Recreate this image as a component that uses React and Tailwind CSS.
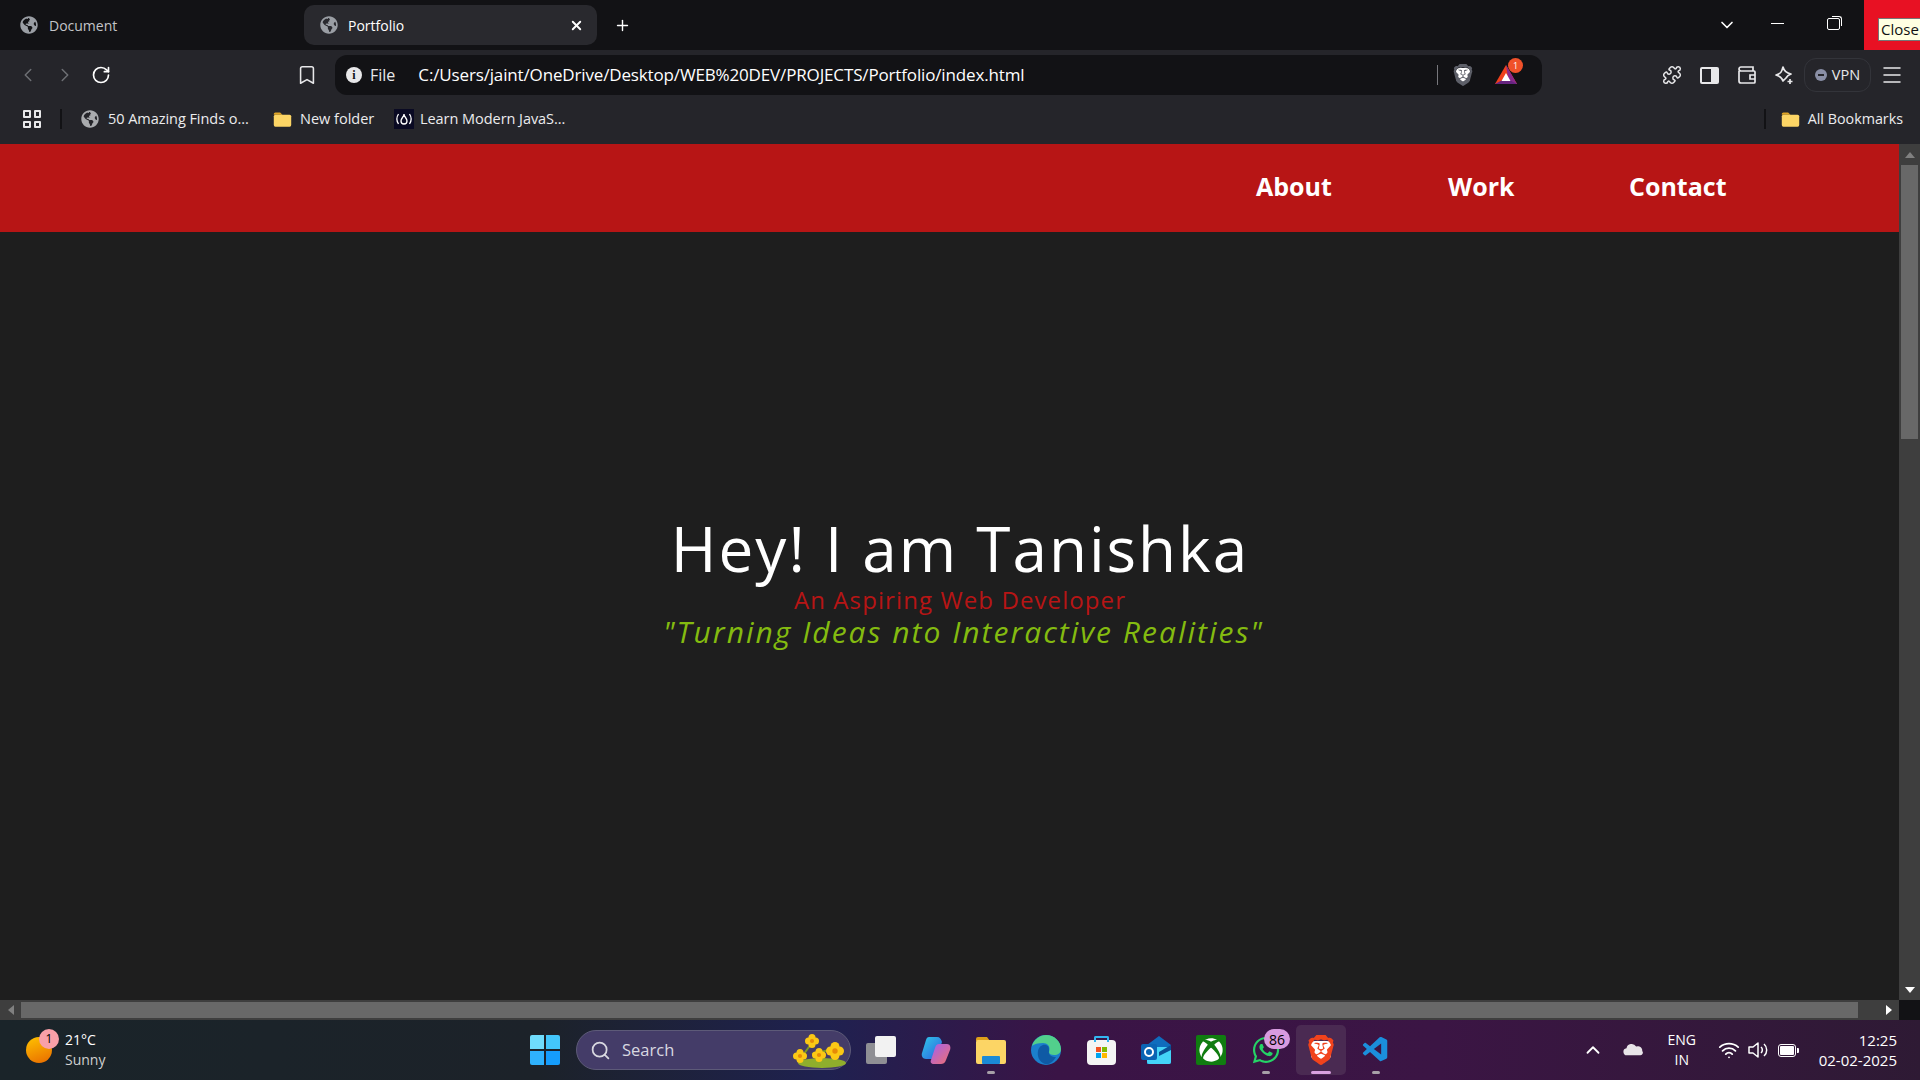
import React from 'react';
import { Bookmark, ChevronDown, ChevronLeft, ChevronRight, ChevronUp, Menu, Plus, Puzzle, RotateCw, Search, Wifi, X } from 'lucide-react';
import { FaGlobeAmericas, FaWhatsapp, FaXbox } from 'react-icons/fa';
import { SiBrave } from 'react-icons/si';
import { VscVscode } from 'react-icons/vsc';

const FolderIcon = ({ className }) => (
  <svg viewBox="0 0 24 20" className={className}>
    <path d="M1 3a2 2 0 012-2h6l3 3H1z" fill="#e0a526" />
    <rect x="1" y="4" width="22" height="15" rx="2" fill="#fcd565" />
  </svg>
);

const BraveBadge = ({ color, size }) => (
  <div className={`relative flex items-center justify-center ${size}`}>
    <div className="absolute inset-x-[18%] inset-y-[20%] rounded-[4px] bg-white" />
    <SiBrave className={`relative h-full w-full ${color}`} />
  </div>
);

const Blossom = ({ x, y, r }) => (
  <g fill="#fbc815">
    <circle cx={x - r} cy={y} r={r} />
    <circle cx={x + r} cy={y} r={r} />
    <circle cx={x} cy={y - r} r={r} />
    <circle cx={x} cy={y + r} r={r} />
    <circle cx={x} cy={y} r={r * 0.6} fill="#e58a07" />
  </g>
);

const TabStrip = () => (
  <div className="flex h-[50px] items-center bg-[#121215] text-[14px]">
    <div className="flex h-[42px] w-[304px] items-center gap-[11px] pl-[20px] text-[#c3c4c8]">
      <FaGlobeAmericas className="h-[18px] w-[18px] text-[#9a9ea4]" />
      <span>Document</span>
    </div>
    <div className="flex h-[40px] w-[293px] items-center gap-[10px] rounded-[10px] bg-[#29292e] pl-[16px] pr-[13px] text-white">
      <FaGlobeAmericas className="h-[18px] w-[18px] text-[#9a9ea4]" />
      <span className="flex-1">Portfolio</span>
      <X className="h-[15px] w-[15px]" strokeWidth={3} />
    </div>
    <Plus className="ml-[17px] h-[17px] w-[17px] text-white" strokeWidth={2} />
    <div className="flex-1" />
    <ChevronDown className="h-[20px] w-[20px] text-white" strokeWidth={2} />
    <div className="ml-[34px] mb-[3px] h-px w-[13px] bg-white" />
    <div className="relative ml-[43px] h-[12px] w-[13px] -translate-y-[1px] rounded-[2px] border border-white">
      <div className="absolute -right-[3px] -top-[3px] h-[10px] w-[10px] rounded-tr-[3px] border-r border-t border-white" />
    </div>
    <div className="relative ml-[24px] h-[50px] w-[56px] bg-[#e81123]">
      <div className="absolute left-[14px] top-[18px] flex h-[23px] w-[44px] items-center justify-center border border-[#767676] bg-[#ffffe1] text-[15px] text-[#111]">
        Close
      </div>
    </div>
  </div>
);

const AddressBar = () => (
  <div className="flex h-[50px] items-center bg-[#25252a]">
    <ChevronLeft className="ml-[17px] h-[22px] w-[22px] text-[#6e7075]" strokeWidth={1.6} />
    <ChevronRight className="ml-[15px] h-[22px] w-[22px] text-[#6e7075]" strokeWidth={1.6} />
    <RotateCw className="ml-[15px] h-[20px] w-[20px] text-white" strokeWidth={2} />
    <Bookmark className="ml-[185px] h-[22px] w-[22px] text-[#e8e8ea]" strokeWidth={1.7} />
    <div className="ml-[17px] flex h-[40px] w-[1207px] items-center rounded-[12px] bg-[#121215] pl-[11px] pr-[24px] text-[17px] text-white">
      <span className="flex h-[16px] w-[16px] items-center justify-center rounded-full bg-[#e8e8ea] font-['Liberation_Serif',serif] text-[12px] font-bold text-[#121215]">i</span>
      <span className="ml-[8px] text-[16px] text-[#e8e8ea]">File</span>
      <span className="ml-[23px] tracking-[-0.15px]">C:/Users/jaint/OneDrive/Desktop/WEB%20DEV/PROJECTS/Portfolio/index.html</span>
      <div className="flex-1" />
      <div className="h-[20px] w-px bg-[#77777c]" />
      <BraveBadge color="text-[#5d5f68]" size="ml-[14px] h-[22px] w-[22px]" />
      <div className="relative ml-[20px] h-[24px] w-[24px]">
        <svg viewBox="0 0 24 24" className="h-[24px] w-[24px]">
          <path d="M12 2l11 19H1z" fill="#f0401c" />
          <path d="M12 2l11 19h-8z" fill="#8b2a8e" />
          <path d="M1 21h22l-11-6z" fill="#66247f" />
          <path d="M12 10l4.500 8h-9z" fill="#fff" />
        </svg>
        <span className="absolute -right-[5px] -top-[5px] flex h-[15px] w-[15px] items-center justify-center rounded-full bg-[#f0512a] text-[9px] text-white">1</span>
      </div>
    </div>
    <Puzzle className="ml-[120px] h-[20px] w-[20px] text-[#e8e8ea]" strokeWidth={1.8} />
    <div className="ml-[18px] flex h-[17px] w-[19px] overflow-hidden rounded-[2px] border-2 border-[#e8e8ea]">
      <div className="flex-1" />
      <div className="w-[6px] bg-[#e8e8ea]" />
    </div>
    <svg viewBox="0 0 20 18" fill="none" stroke="#e8e8ea" strokeWidth="1.700" className="ml-[18px] h-[18px] w-[20px]">
      <path d="M2 5V15a2 2 0 002 2h13a1 1 0 001-1V6a1 1 0 00-1-1H4a2 2 0 01-2-2 2 2 0 012-2h12v4" />
      <path d="M18 9h-5v4h5" />
    </svg>
    <svg viewBox="0 0 20 20" fill="none" stroke="#e8e8ea" strokeWidth="1.700" className="ml-[17px] h-[20px] w-[20px]">
      <path d="M9 2c1 4 3 6 8 7-3 1-4 2-5 4l-3 3-1-2c-1-2-3-3-6-4 5-1 6-4 7-8z" strokeLinejoin="round" />
      <path d="M16 14v5M13.500 16.500h5" />
    </svg>
    <div className="ml-[10px] flex h-[34px] w-[67px] items-center justify-center gap-[5px] rounded-[12px] border border-[#33343a] text-[14.500px] text-[#e8e8ea]">
      <span className="flex h-[12px] w-[12px] items-center justify-center rounded-full bg-[#8a8fa6]">
        <span className="h-[2px] w-[6px] bg-[#25252a]" />
      </span>
      VPN
    </div>
    <Menu className="ml-[9px] h-[24px] w-[24px] text-[#e8e8ea]" strokeWidth={1.5} />
  </div>
);

const BookmarksBar = () => (
  <div className="flex h-[44px] items-center bg-[#25252a] pb-[6px] text-[14.500px] text-[#ececee]">
    <div className="ml-[23px] grid h-[18px] w-[18px] grid-cols-2 gap-[3px]">
      <span className="rounded-[1px] border-[2px] border-[#e8e8ea]" />
      <span className="rounded-[1px] border-[2px] border-[#e8e8ea]" />
      <span className="rounded-[1px] border-[2px] border-[#e8e8ea]" />
      <span className="rounded-[1px] border-[2px] border-[#e8e8ea]" />
    </div>
    <div className="ml-[19px] h-[20px] w-[2px] bg-[#121215]" />
    <FaGlobeAmericas className="ml-[19px] h-[18px] w-[18px] text-[#a9abae]" />
    <span className="ml-[9px] w-[165px] tracking-[-0.05px]">50 Amazing Finds o...</span>
    <FolderIcon className="h-[17px] w-[19px]" />
    <span className="ml-[8px] w-[94px]">New folder</span>
    <svg viewBox="0 0 20 20" fill="none" stroke="#fff" strokeWidth="1.300" className="h-[20px] w-[20px] bg-[#0a0a23]">
      <path d="M4.500 5c-2 3-2 7 0 10M15.500 5c2 3 2 7 0 10" />
      <path d="M10 5c0 3-3 4-3 7 0 2 1.500 3 3 3s3-1 3-3c0-3-3-4-3-7z" />
    </svg>
    <span className="ml-[6px] tracking-[-0.05px]">Learn Modern JavaS...</span>
    <div className="flex-1" />
    <div className="h-[20px] w-[2px] bg-[#121215]" />
    <FolderIcon className="ml-[15px] h-[17px] w-[19px]" />
    <span className="ml-[8px] mr-[17px] text-[14.300px]">All Bookmarks</span>
  </div>
);

const Page = () => (
  <div className="flex min-w-0 flex-1 flex-col bg-[#1e1e1e]">
    <nav className="flex h-[88px] items-center bg-[#b71515] pb-[2px] font-['Open_Sans',sans-serif] text-[25px] font-bold text-white">
      <a className="ml-[1256px] w-[192px]">About</a>
      <a className="w-[181px]">Work</a>
      <a>Contact</a>
    </nav>
    <main className="flex flex-col items-center pl-[21px] pt-[280px] font-['Open_Sans',sans-serif]">
      <h1 className="text-[62px] leading-[72px] tracking-[2px] text-white">Hey! I am Tanishka</h1>
      <p className="mt-[1px] text-[24px] leading-[30px] tracking-[1.100px] text-[#b71515]">An Aspiring Web Developer</p>
      <p className="ml-[7px] text-[30px] italic leading-[34px] tracking-[2px] text-[#84bb10]">"Turning Ideas nto Interactive Realities"</p>
    </main>
  </div>
);

const VerticalScrollbar = () => (
  <div className="flex w-[21px] flex-col items-center bg-[#3e3e3e]">
    <div className="flex h-[21px] items-center text-[#888]">
      <div className="h-0 w-0 border-x-[5px] border-b-[6px] border-x-transparent border-b-[#808080]" />
    </div>
    <div className="h-[274px] w-[17px] bg-[#686868]" />
    <div className="flex-1" />
    <div className="flex h-[21px] items-center">
      <div className="h-0 w-0 border-x-[5px] border-t-[6px] border-x-transparent border-t-white" />
    </div>
  </div>
);

const HorizontalScrollbar = () => (
  <div className="flex h-[20px] bg-[#3e3e3e]">
    <div className="flex w-[21px] items-center justify-center">
      <div className="h-0 w-0 border-y-[5px] border-r-[6px] border-y-transparent border-r-[#808080]" />
    </div>
    <div className="my-[2px] w-[1837px] bg-[#686868]" />
    <div className="flex-1" />
    <div className="flex w-[21px] items-center justify-center">
      <div className="h-0 w-0 border-y-[5px] border-l-[6px] border-y-transparent border-l-white" />
    </div>
    <div className="w-[21px] bg-[#121215]" />
  </div>
);

const TaskbarApp = ({ children, dot, active }) => (
  <div className={`relative flex h-[50px] w-[50px] items-center justify-center rounded-[5px] ${active ? 'bg-[#4a2a52]' : ''}`}>
    {children}
    {dot && <span className="absolute bottom-[1px] h-[3px] w-[8px] rounded-full bg-[#a7a0a8]" />}
    {active && <span className="absolute bottom-[1px] h-[3px] w-[20px] rounded-full bg-[#d9a0e0]" />}
  </div>
);

const Taskbar = () => (
  <div className="relative flex h-[60px] items-center bg-[linear-gradient(90deg,#1a2429_0%,#1c2229_28%,#1f2150_43%,#3a1446_55%,#3b1544_75%,#2e1a34_100%)] font-['Open_Sans',sans-serif] text-white">
    {/* weather */}
    <div className="relative ml-[26px] h-[26px] w-[26px] rounded-full bg-[linear-gradient(160deg,#ffc400,#e86a00)]">
      <span className="absolute -right-[7px] -top-[8px] flex h-[20px] w-[20px] items-center justify-center rounded-full bg-[#f9a0a8] text-[12px] text-black">1</span>
    </div>
    <div className="ml-[13px] w-[480px] text-[14px] leading-[20px]">
      <div>21°C</div>
      <div className="text-[#d0d0d0]">Sunny</div>
    </div>

    {/* start and search */}
    <div className="absolute left-[530px] top-[15px] grid h-[30px] w-[30px] grid-cols-2 gap-[2px]">
      <span className="rounded-tl-[2px] bg-[#6fdcfc]" />
      <span className="rounded-tr-[2px] bg-[#43c6fb]" />
      <span className="rounded-bl-[2px] bg-[#2fb2fd]" />
      <span className="rounded-br-[2px] bg-[#159dfc]" />
    </div>
    <div className="absolute left-[576px] top-[10px] flex h-[40px] w-[275px] items-center rounded-full border border-[#5d5a78] bg-[#443c68] pl-[13px] text-[16.500px] text-[#d8d8e0]">
      <Search className="h-[21px] w-[21px]" strokeWidth={2} />
      <span className="ml-[11px] flex-1">Search</span>
      <svg viewBox="0 0 60 36" className="mr-[2px] h-[36px] w-[60px]">
        <ellipse cx="34" cy="31" rx="24" ry="5" fill="#8fae2c" />
        <path d="M10 30L26 8M24 22l26-6" stroke="#7d9a20" strokeWidth="2" fill="none" />
        <Blossom x={24} y={9} r={3.500} />
        <Blossom x={12} y={24} r={3.500} />
        <Blossom x={31} y={23} r={3.500} />
        <Blossom x={47} y={19} r={4.500} />
      </svg>
    </div>

    {/* pinned apps */}
    <div className="absolute left-[856px] top-[5px] flex gap-[5px]">
      <TaskbarApp>
        <div className="relative h-[28px] w-[30px]">
          <div className="absolute bottom-0 left-0 h-[21px] w-[21px] rounded-[2px] bg-[#8f8f94]" />
          <div className="absolute right-0 top-0 h-[21px] w-[21px] rounded-[2px] bg-[#f2f2f2]" />
        </div>
      </TaskbarApp>
      <TaskbarApp>
        <svg viewBox="0 0 30 28" className="h-[28px] w-[30px]">
          <defs>
            <linearGradient id="copilotA" x1="0" y1="0" x2="1" y2="1">
              <stop offset="0" stopColor="#30c8e8" />
              <stop offset="1" stopColor="#2c5fe0" />
            </linearGradient>
            <linearGradient id="copilotB" x1="0" y1="0" x2="1" y2="1">
              <stop offset="0" stopColor="#a060f0" />
              <stop offset="1" stopColor="#f07070" />
            </linearGradient>
          </defs>
          <path d="M8 1h8c3 0 4 2 5 5l-5 14c-1 2-2 3-5 3H5c-3 0-5-3-4-6L5 4c.5-2 1.500-3 3-3z" fill="url(#copilotA)" />
          <path d="M14 12c1-3 2-4 4-4h8c3 0 4 3 3 6l-4 10c-1 3-3 4-5 4h-7c-3 0-4-2-3-4z" fill="url(#copilotB)" />
        </svg>
      </TaskbarApp>
      <TaskbarApp dot>
        <svg viewBox="0 0 30 28" className="h-[28px] w-[30px]">
          <path d="M0 3a2 2 0 012-2h9l3 4H0z" fill="#dea01a" />
          <rect y="4" width="30" height="24" rx="2" fill="#fcd565" />
          <rect x="6" y="20" width="18" height="8" rx="1" fill="#1b8ad6" />
        </svg>
      </TaskbarApp>
      <TaskbarApp>
        <svg viewBox="0 0 30 30" className="h-[30px] w-[30px]">
          <circle cx="15" cy="15" r="15" fill="#1b7fcc" />
          <path d="M1 11C3 4 9 0 15 0c9 0 15 7 15 14 0 4-3 6-7 6-3 0-5-1-5-3 2-6-2-9-6-9-5 0-9 1-11 3z" fill="#52cf8c" />
          <path d="M7 16c1-5 5-7 8-6 3 1 3 3 3 6-1 4 3 6 7 6-3 5-7 8-11 7-6-2-8-8-7-13z" fill="#0f5aa5" />
        </svg>
      </TaskbarApp>
      <TaskbarApp>
        <div className="relative flex h-[25px] w-[29px] translate-y-[2px] items-center justify-center rounded-[4px] bg-[#f4f4f4]">
          <div className="absolute -top-[4px] h-[6px] w-[15px] rounded-t-[2px] border-x-2 border-t-2 border-[#33b5f0]" />
          <div className="grid h-[11px] w-[11px] grid-cols-2 gap-px">
            <span className="bg-[#f25022]" />
            <span className="bg-[#7fba00]" />
            <span className="bg-[#00a4ef]" />
            <span className="bg-[#ffb900]" />
          </div>
        </div>
      </TaskbarApp>
      <TaskbarApp>
        <svg viewBox="0 0 30 28" className="h-[28px] w-[30px]">
          <path d="M6 9l12-9 12 9v17a2 2 0 01-2 2H6z" fill="#0f6cbd" />
          <path d="M6 11h24v15a2 2 0 01-2 2H8a2 2 0 01-2-2z" fill="#44d4f8" />
          <path d="M18 16l12-7v5l-12 6z" fill="#0b4f94" />
          <rect y="8" width="16" height="16" rx="2" fill="#0b64b4" />
          <circle cx="8" cy="16" r="4" fill="none" stroke="#fff" strokeWidth="2" />
        </svg>
      </TaskbarApp>
      <TaskbarApp>
        <div className="flex h-[30px] w-[30px] items-center justify-center rounded-[2px] bg-[#107c10]">
          <FaXbox className="h-[24px] w-[24px] text-white" />
        </div>
      </TaskbarApp>
      <TaskbarApp dot>
        <FaWhatsapp className="h-[30px] w-[30px] text-[#25d366]" />
        <span className="absolute right-[1px] top-[4px] flex h-[20px] w-[26px] items-center justify-center rounded-full bg-[#d89be0] text-[14px] text-black">86</span>
      </TaskbarApp>
      <TaskbarApp active>
        <BraveBadge color="text-[#f1431c]" size="h-[30px] w-[30px]" />
      </TaskbarApp>
      <TaskbarApp dot>
        <VscVscode className="h-[30px] w-[30px] text-[#1b8fdc]" />
      </TaskbarApp>
    </div>

    {/* tray */}
    <div className="flex-1" />
    <ChevronUp className="h-[22px] w-[22px]" strokeWidth={2} />
    <svg viewBox="0 0 24 14" className="ml-[19px] h-[14px] w-[21px]">
      <path d="M5 13a4 4 0 01-1-8 6 6 0 0111-2 5 5 0 017 5 3 3 0 01-2 5z" fill="#e8e4e8" />
    </svg>
    <div className="ml-[23px] w-[30px] text-center text-[14px] leading-[20px]">
      <div>ENG</div>
      <div>IN</div>
    </div>
    <Wifi className="ml-[21px] h-[22px] w-[22px]" strokeWidth={2} />
    <svg viewBox="0 0 22 20" fill="none" stroke="#fff" strokeWidth="1.500" className="ml-[7px] h-[20px] w-[22px]">
      <path d="M2 7h4l5-4v14l-5-4H2z" strokeLinejoin="round" />
      <path d="M14 7a4 4 0 010 6M17 4a8 8 0 010 12" />
    </svg>
    <div className="relative ml-[9px] flex h-[13px] w-[18px] items-center rounded-[3px] border-[1.500px] border-white p-[1px]">
      <div className="h-full w-full rounded-[1px] bg-white" />
      <div className="absolute -right-[4px] h-[5px] w-[2px] rounded-r-[1px] bg-white" />
    </div>
    <div className="ml-[23px] mr-[23px] text-right text-[15px] leading-[20px]">
      <div>12:25</div>
      <div>02-02-2025</div>
    </div>
  </div>
);

const App = () => {
  return (
    <div className="flex h-[1080px] w-[1920px] flex-col overflow-hidden bg-[#121215] font-['Open_Sans','Noto_Sans',sans-serif]">
      <TabStrip />
      <AddressBar />
      <BookmarksBar />
      <div className="flex min-h-0 flex-1">
        <Page />
        <VerticalScrollbar />
      </div>
      <HorizontalScrollbar />
      <Taskbar />
    </div>
  );
};

export default App;
